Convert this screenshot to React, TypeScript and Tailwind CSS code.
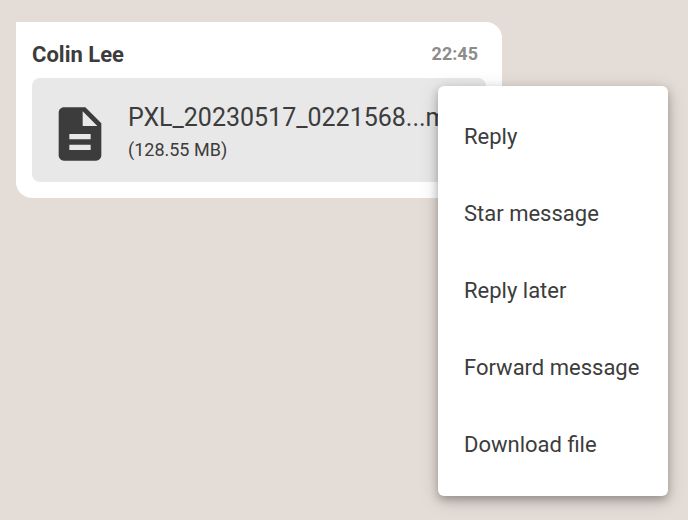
const menuItems = ["Reply", "Star message", "Reply later", "Forward message", "Download file"];

function FileIcon() {
  return (
    <svg className="h-16 w-16 shrink-0" viewBox="0 0 24 24" fill="currentColor" aria-hidden="true">
      <path d="M14 2H6c-1.1 0-1.99.9-1.99 2L4 20c0 1.1.89 2 1.99 2H18c1.1 0 2-.9 2-2V8l-6-6zm2 16H8v-2h8v2zm0-4H8v-2h8v2zm-3-5V3.500L18.500 9H13z" />
    </svg>
  );
}

export default function App() {
  return (
    <main className="min-h-screen bg-[#e4dcd6] pl-4 pr-5 pt-[22px] font-['Roboto',sans-serif] text-[#3c3c3c]">
      <div className="relative">
        <article className="mr-[166px] rounded-2xl rounded-tl-none bg-white p-4">
          <header className="flex h-10 items-start justify-between pr-2">
            <h2 className="text-[22px] leading-[34px] font-bold">Colin Lee</h2>
            <time className="text-[18px] leading-8 font-bold text-[#8c8c8c]">22:45</time>
          </header>
          <div className="flex items-center gap-4 overflow-hidden rounded-lg bg-[#e8e8e8] px-4 pt-6 pb-4">
            <FileIcon />
            <div className="whitespace-nowrap">
              <p className="text-[25px] leading-8">PXL_20230517_0221568...mp4</p>
              <p className="text-[18px] leading-8">(128.55 MB)</p>
            </div>
          </div>
        </article>

        {/* Message actions, opened over the bubble */}
        <div
          role="menu"
          className="absolute right-0 top-16 flex flex-col rounded-md bg-white pt-3 pb-[13px] shadow-[0_4px_8px_rgba(0,0,0,0.26),0_4px_20px_rgba(0,0,0,0.16)]"
        >
          {menuItems.map((item) => (
            <button
              key={item}
              type="button"
              role="menuitem"
              className="h-[77px] min-w-[230px] px-[26px] text-left text-[22px] whitespace-nowrap"
            >
              {item}
            </button>
          ))}
        </div>
      </div>
    </main>
  );
}
